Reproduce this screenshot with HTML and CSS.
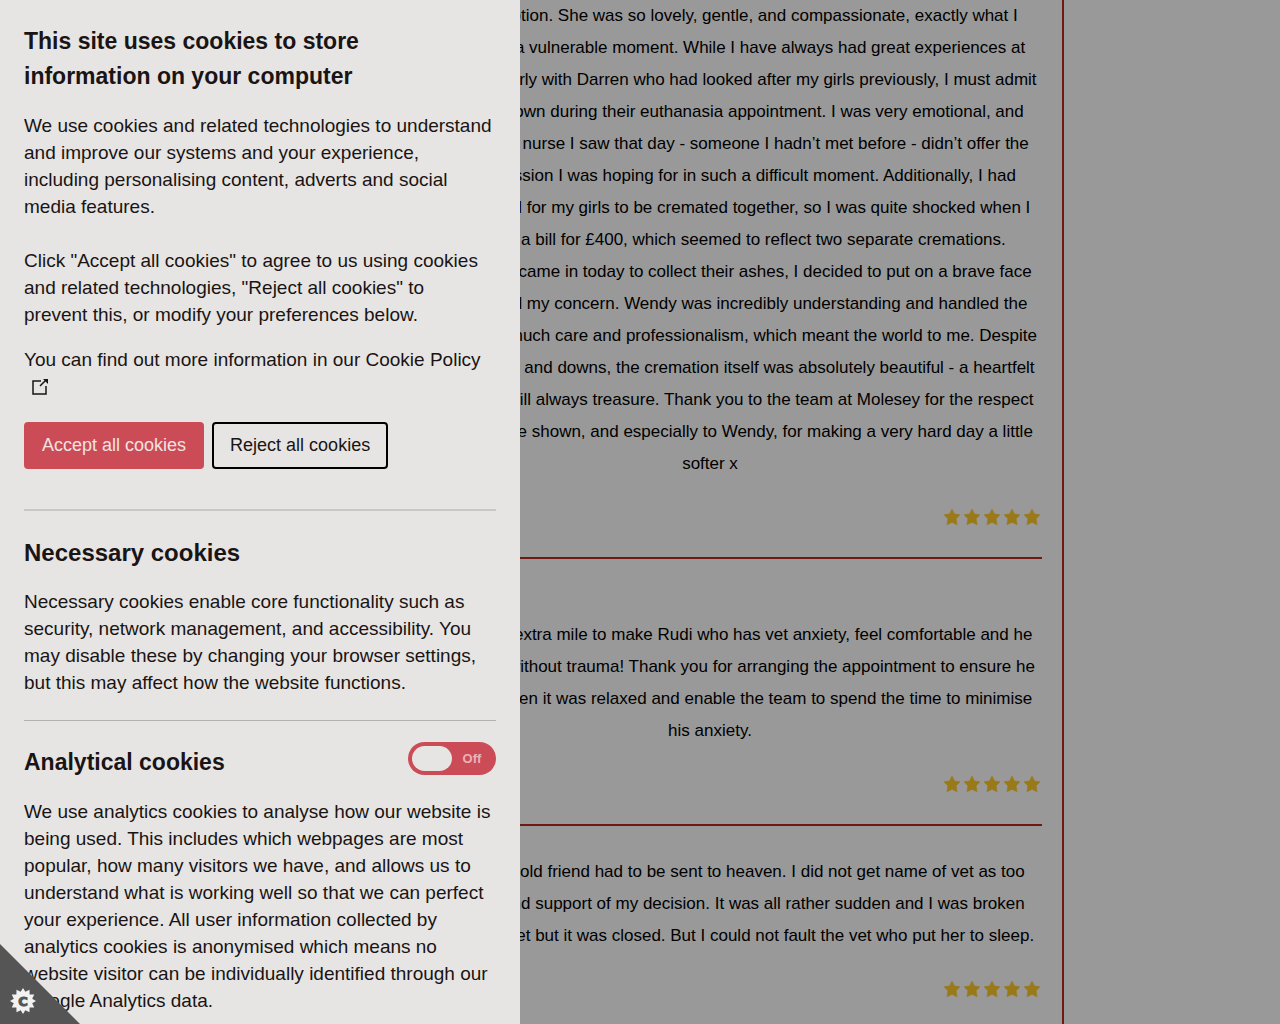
FILE: index.html
```html
<!DOCTYPE html>
<html lang="en">
<head>
<meta charset="utf-8">
<title>Reviews</title>
<link rel="stylesheet" href="styles.css">
</head>
<body>
<svg class="sprite" aria-hidden="true">
  <symbol id="star" viewBox="0 0 16 16"><path d="M8 0l2.400 4.900 5.600.9-3.900 4 .9 5.900-5-2.500-5 2.500.9-5.900L0 5.800l5.600-.9z" stroke-width=".6" stroke-linejoin="round"/></symbol>
  <symbol id="stars" viewBox="0 0 96 16">
    <use href="#star" x="0" width="16" height="16"/><use href="#star" x="20" width="16" height="16"/><use href="#star" x="40" width="16" height="16"/><use href="#star" x="60" width="16" height="16"/><use href="#star" x="80" width="16" height="16"/>
  </symbol>
</svg>

<div class="page">
  <main class="reviews">
    <article class="review">
      <p>Wendy at reception. She was so lovely, gentle, and compassionate, exactly what I<br>
      needed in such a vulnerable moment. While I have always had great experiences at<br>
      Molesey, particularly with Darren who had looked after my girls previously, I must admit<br>
      I felt rather let down during their euthanasia appointment. I was very emotional, and<br>
      unfortunately the nurse I saw that day - someone I hadn’t met before - didn’t offer the<br>
      level of compassion I was hoping for in such a difficult moment. Additionally, I had<br>
      specifically asked for my girls to be cremated together, so I was quite shocked when I<br>
      then received a bill for £400, which seemed to reflect two separate cremations.<br>
      However, when I came in today to collect their ashes, I decided to put on a brave face<br>
      and gently raised my concern. Wendy was incredibly understanding and handled the<br>
      situation with so much care and professionalism, which meant the world to me. Despite<br>
      the emotional ups and downs, the cremation itself was absolutely beautiful - a heartfelt<br>
      farewell which I will always treasure. Thank you to the team at Molesey for the respect<br>
      and care you have shown, and especially to Wendy, for making a very hard day a little<br>
      softer x</p>
      <footer><svg class="rating" role="img" aria-label="5 stars"><use href="#stars"/></svg></footer>
    </article>
    <article class="review review-spaced">
      <p>Wendy went the extra mile to make Rudi who has vet anxiety, feel comfortable and he<br>
      was seen today without trauma! Thank you for arranging the appointment to ensure he<br>
      could come in when it was relaxed and enable the team to spend the time to minimise<br>
      his anxiety.</p>
      <footer><svg class="rating" role="img" aria-label="5 stars"><use href="#stars"/></svg></footer>
    </article>
    <article class="review">
      <p>Sadly our lovely old friend had to be sent to heaven. I did not get name of vet as too<br>
      with kindness and support of my decision. It was all rather sudden and I was broken<br>
      I called my own vet but it was closed. But I could not fault the vet who put her to sleep.</p>
      <footer><svg class="rating" role="img" aria-label="5 stars"><use href="#stars"/></svg></footer>
    </article>
  </main>
</div>

<div class="overlay"></div>

<aside class="cookies" aria-label="Cookie preferences">
  <h2>This site uses cookies to store information on your computer</h2>
  <p>We use cookies and related technologies to understand and improve our systems and your experience, including personalising content, adverts and social media features.<br><br>Click "Accept all cookies" to agree to us using cookies and related technologies, "Reject all cookies" to<br>prevent this, or modify your preferences below.</p>
  <p>You can find out more information in our <a href="#policy">Cookie Policy <svg class="external" viewBox="0 0 18 18" aria-hidden="true"><path d="M10 3H2v13h13V8M9 8l6-6"/><path class="tip" d="M12 1h5v5z"/></svg></a></p>
  <div class="actions">
    <button class="btn btn-accept" type="button">Accept all cookies</button>
    <button class="btn btn-reject" type="button">Reject all cookies</button>
  </div>
  <hr class="rule-thick">
  <h3 class="necessary">Necessary cookies</h3>
  <p>Necessary cookies enable core functionality such as security, network management, and accessibility. You may disable these by changing your browser settings, but this may affect how the website functions.</p>
  <hr>
  <div class="option">
    <h3 id="analytical">Analytical cookies</h3>
    <label class="toggle"><input type="checkbox" aria-labelledby="analytical"><span class="knob"></span><span class="state">Off</span></label>
  </div>
  <p>We use analytics cookies to analyse how our website is being used. This includes which webpages are most popular, how many visitors we have, and allows us to understand what is working well so that we can perfect your experience. All user information collected by analytics cookies is anonymised which means no website visitor can be individually identified through our Google Analytics data.</p>
</aside>

<button class="corner" type="button" aria-label="Cookie preferences">
  <svg viewBox="0 0 26 26" aria-hidden="true">
    <path class="burst" d="M13 0l2.300 3.800 4.200-2.060.1 4.660 4.660.1-2.060 4.200L26 13l-3.800 2.300 2.060 4.200-4.660.1-.1 4.660-4.200-2.060L13 26l-2.300-3.800-4.200 2.060-.1-4.660-4.660-.1 2.060-4.200L0 13l3.800-2.300L1.740 6.500l4.660-.1.1-4.660 4.200 2.060z"/>
    <text x="13" y="18" text-anchor="middle">C</text>
  </svg>
</button>
</body>
</html>
```
FILE: styles.css
```css
* { box-sizing: border-box; }
html, body { height: 100%; }
body {
  margin: 0;
  overflow: hidden;
  background: #fff;
  color: #000;
  font-family: "Liberation Sans", Arial, sans-serif;
}
h2, h3, p { margin: 0; }
.sprite { display: none; }

.page {
  display: grid;
  grid-template-columns: 356px 1fr 216px;
}
.reviews {
  grid-column: 2;
  padding: 0 20px;
  border: solid #be2820;
  border-width: 0 2px;
}
.review {
  margin-bottom: 30px;
  border-bottom: 2px solid #be2820;
  font-size: 17px;
  line-height: 32px;
}
.review p {
  display: flow-root;
  text-align: center;
  white-space: nowrap;
}
.review-spaced { padding-top: 30px; }
.review footer {
  display: flex;
  align-items: center;
  justify-content: flex-end;
  height: 77px;
  padding: 0 2px 4px 0;
}
.rating {
  width: 96px;
  height: 16px;
  overflow: visible;
  fill: #ffca28;
  stroke: #ffca28;
}

.overlay {
  position: fixed;
  inset: 0;
  background: rgba(0, 0, 0, .4);
}

.cookies {
  position: fixed;
  inset: 0 auto 0 0;
  width: 520px;
  max-width: 100%;
  padding: 24px;
  overflow: hidden;
  background: #e6e5e3;
  color: #1a1414;
  font-size: 19px;
  line-height: 27px;
}
.cookies h2, .cookies h3 {
  margin-bottom: 18px;
  font-size: 23px;
  line-height: 35px;
}
.cookies h2 { max-width: 400px; }
.cookies .necessary { font-size: 24px; }
.cookies p + p { margin-top: 18px; }
.cookies a { color: inherit; text-decoration: none; }
.external {
  width: 18px;
  height: 18px;
  margin-left: 7px;
  vertical-align: -3px;
  fill: none;
  stroke: #1a1414;
  stroke-width: 1.5;
}
.external .tip { fill: #1a1414; stroke: none; }
.actions { display: flex; gap: 8px; margin: 22px 0 40px; }
.btn {
  height: 47px;
  padding: 0 16px;
  border: 2px solid #000;
  border-radius: 4px;
  background: none;
  color: #1a1414;
  font: 18px "Liberation Sans", Arial, sans-serif;
}
.btn-accept {
  border-color: #cb4b57;
  background: #cb4b57;
  color: #f0e3e1;
}
hr {
  height: 1px;
  margin: 24px 0;
  border: 0;
  background: #b3b0af;
}
.rule-thick { height: 2px; background: #c9c8c6; }

.option { display: flex; justify-content: space-between; }
.toggle {
  display: flex;
  align-items: center;
  width: 88px;
  height: 33px;
  margin-top: -3px;
  padding: 4px;
  border-radius: 17px;
  background: #cb4b57;
}
.toggle input { position: absolute; opacity: 0; }
.knob {
  width: 40px;
  height: 25px;
  border-radius: 13px;
  background: #e6e5e3;
}
.state {
  flex: 1;
  text-align: center;
  color: #e9b3b6;
  font-size: 13px;
  font-weight: bold;
}

.corner {
  position: fixed;
  left: 0;
  bottom: 0;
  width: 80px;
  height: 80px;
  padding: 0 0 10px 10px;
  border: 0;
  display: flex;
  align-items: flex-end;
  background: #555;
  clip-path: polygon(0 0, 100% 100%, 0 100%);
}
.corner svg { width: 26px; height: 26px; }
.burst { fill: #f2f2f2; }
.corner text {
  fill: #555;
  stroke: #555;
  font: bold 13px "DejaVu Sans", sans-serif;
}
```
